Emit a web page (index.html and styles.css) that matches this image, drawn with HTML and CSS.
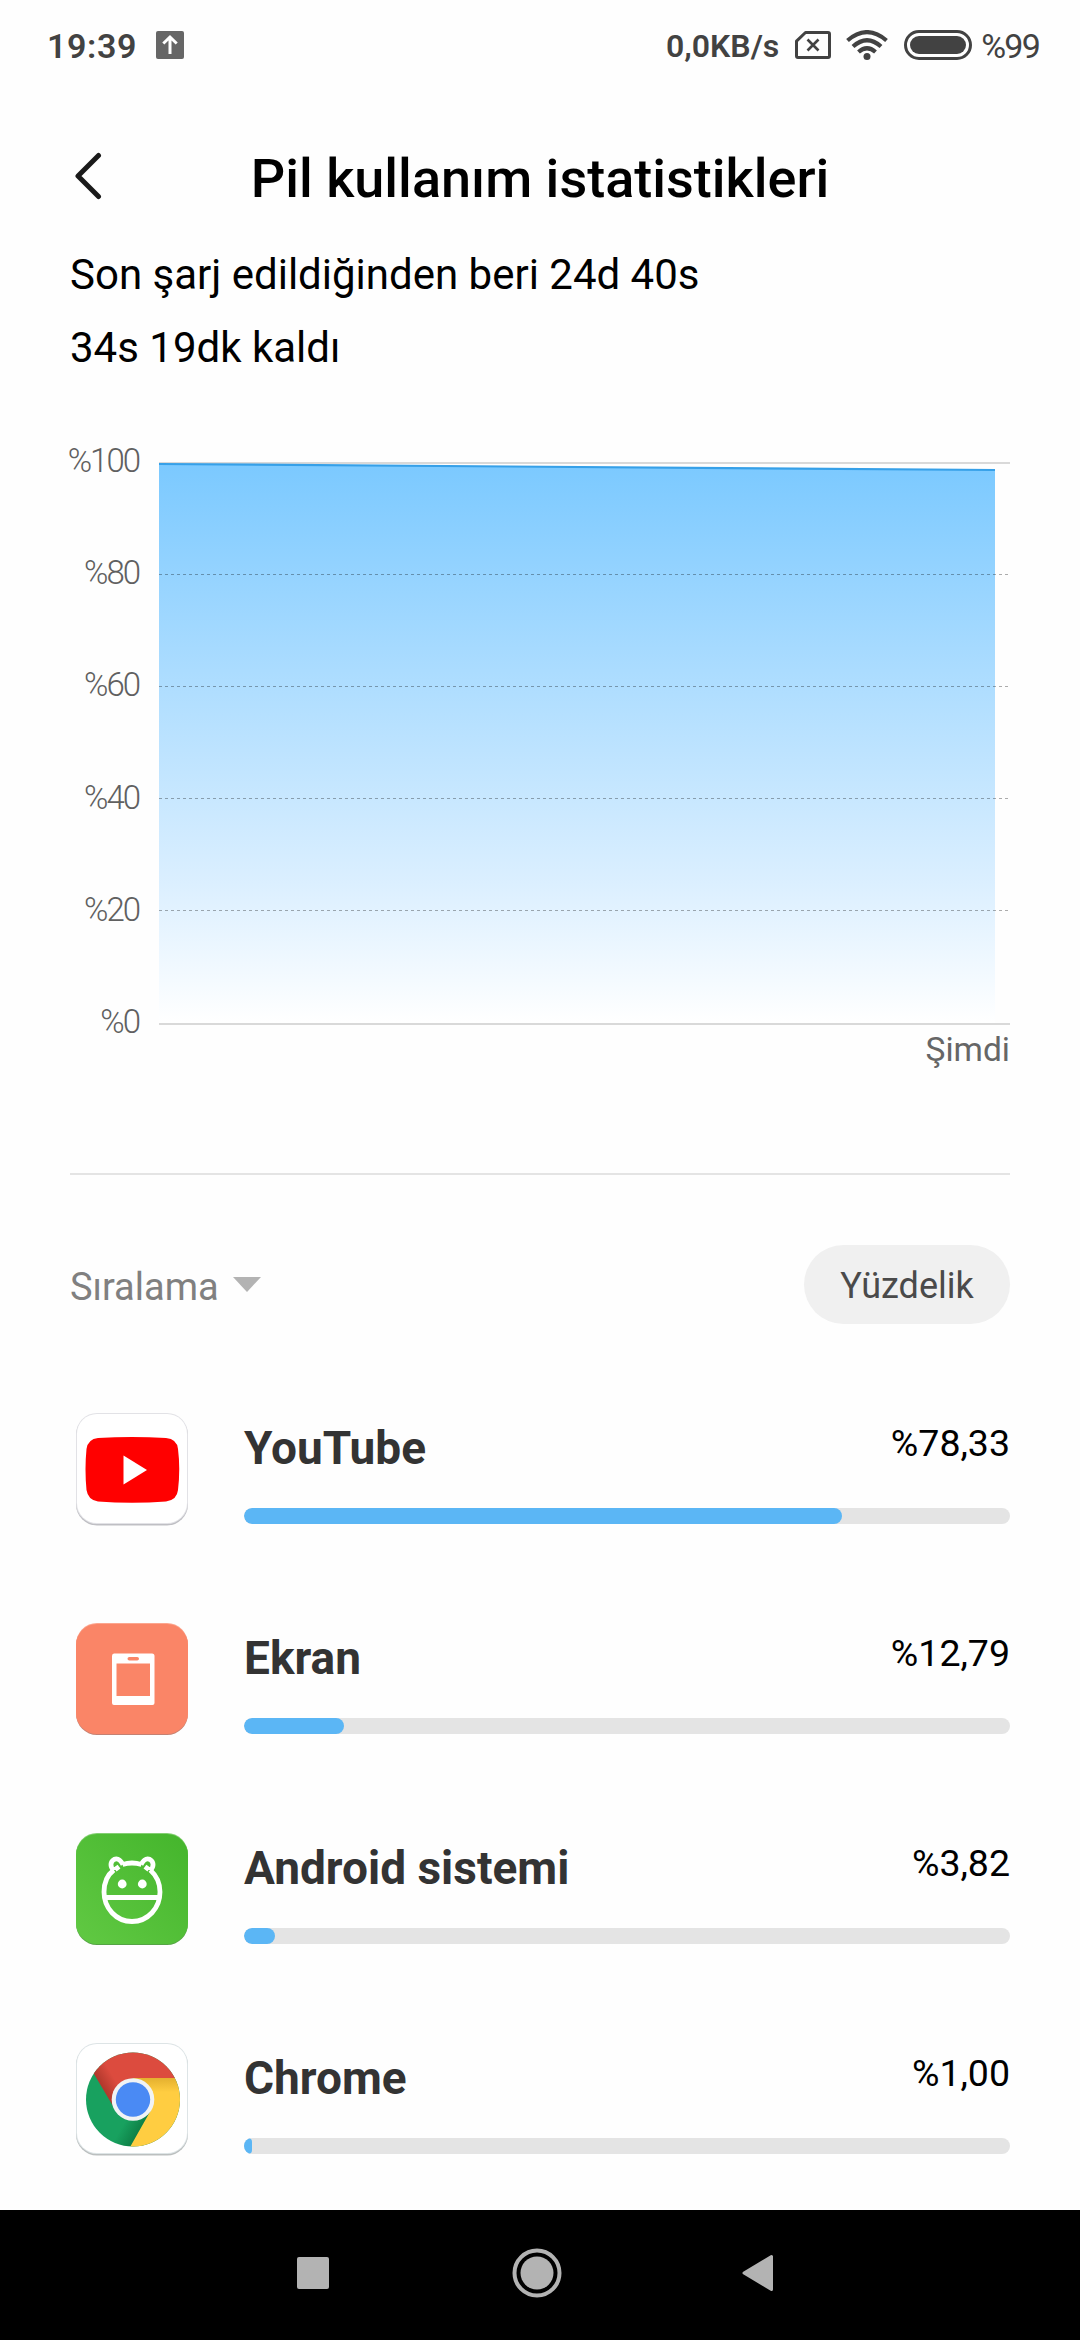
FILE: index.html
```html
<!DOCTYPE html>
<html lang="tr">
<head>
<meta charset="utf-8">
<title>Pil kullanım istatistikleri</title>
<link rel="stylesheet" href="styles.css">
</head>
<body>
<div class="screen">
  <div class="status">
    <span class="clock">19:39</span>
    <svg class="upload" width="28" height="28" viewBox="0 0 28 28"><rect width="28" height="28" rx="2" fill="#666"/><path d="M14 23V7M7.3 12.5 14 6l6.700 6.500" fill="none" stroke="#fff" stroke-width="3"/></svg>
    <span class="speed">0,0KB/s</span>
    <svg class="sim" width="36" height="28" viewBox="0 0 36 28" fill="none" stroke="#424242"><path d="M10.500 1.500H33q1.500 0 1.500 1.500v22q0 1.500-1.500 1.500H3q-1.500 0-1.500-1.500V10.200z" stroke-width="3" stroke-linejoin="round"/><path d="m12.500 8.500 11 11m0-11-11 11" stroke-width="2.600"/></svg>
    <svg class="wifi" width="42" height="30" viewBox="0 0 42 30" fill="none" stroke="#424242" stroke-width="4.200"><path d="M1.500 10.500Q21-6.200 40.500 10.500"/><path d="M7 16.500Q21 4 35 16.500"/><path d="M12.500 22Q21 14.500 29.500 22"/><circle cx="21" cy="26.500" r="3.500" fill="#424242" stroke="none"/></svg>
    <svg class="battery" width="68" height="30" viewBox="0 0 68 30"><rect x="1.500" y="1.500" width="65" height="27" rx="13.500" fill="none" stroke="#424242" stroke-width="3"/><rect x="6" y="6" width="56" height="18" rx="9" fill="#424242"/></svg>
    <span class="level">%99</span>
  </div>

  <div class="header">
    <svg class="back" width="28" height="48" viewBox="0 0 28 48"><path d="M24.500 3.500 4 24l20.500 20.500" fill="none" stroke="#1a1a1a" stroke-width="5" stroke-linecap="round" stroke-linejoin="round"/></svg>
    <h1 class="title">Pil kullanım istatistikleri</h1>
  </div>

  <div class="summary">
    <div>Son şarj edildiğinden beri 24d 40s</div>
    <div>34s 19dk kaldı</div>
  </div>

  <div class="chart">
    <div class="scale">
      <span>%100</span><span>%80</span><span>%60</span><span>%40</span><span>%20</span><span>%0</span>
    </div>
    <div class="plot">
      <svg width="851" height="563" viewBox="0 0 851 563">
        <defs><linearGradient id="area" x1="0" y1="0" x2="0" y2="1"><stop offset="0" stop-color="#7bc9ff"/><stop offset=".33" stop-color="#a6daff"/><stop offset=".75" stop-color="#dbefff"/><stop offset="1" stop-color="#fff"/></linearGradient></defs>
        <path d="M0 1H851M0 562H851" stroke="#d9d9d9" stroke-width="2"/>
        <path d="M0 2 836 8V561H0z" fill="url(#area)"/>
        <path d="M0 2 836 8" stroke="#36a0e8" stroke-width="2.200"/>
        <path d="M0 112.500H850M0 224.500H850M0 336.500H850M0 448.500H850" stroke="#000" stroke-opacity=".32" stroke-width="1" stroke-dasharray="3 3"/>
      </svg>
      <div class="now">Şimdi</div>
    </div>
  </div>

  <div class="controls">
    <div class="sort">Sıralama <svg width="28" height="15" viewBox="0 0 28 15"><path d="M0 0H28L14 15z" fill="#b3b3b3"/></svg></div>
    <div class="mode">Yüzdelik</div>
  </div>

  <div class="list">
    <div class="row">
      <svg class="icon" width="114" height="114" viewBox="0 0 114 114"><rect x="1" y="2" width="112" height="111.500" rx="21" fill="#bfbfc4"/><rect x="1" y="1" width="112" height="111" rx="21" fill="#e2e2e6"/><rect x="2" y="2" width="110" height="109" rx="20" fill="#fff"/><path d="M23 26Q57 24 91 26Q102 27 103 37Q105.500 57 103 78Q102 88 91 89.500Q57 92 23 89.500Q13 88 11.500 78Q9.500 57 11.500 37Q13 27 23 26z" fill="#f00"/><path d="M48.500 43.500V72.500L72 58z" fill="#fff"/></svg>
      <div class="body">
        <div class="head"><span class="name">YouTube</span><span class="value">%78,33</span></div>
        <div class="track"><div class="fill" style="width:598px"></div></div>
      </div>
    </div>
    <div class="row">
      <svg class="icon" width="114" height="114" viewBox="0 0 114 114"><rect x="1" y="2" width="112" height="111" rx="21" fill="#c48172"/><rect x="1" y="1" width="112" height="110" rx="21" fill="#fca68f"/><rect x="1" y="2" width="112" height="110" rx="21" fill="#fa8567"/><path fill-rule="evenodd" fill="#fff" d="M39 31.500H77Q79.500 31.500 79.500 34V81Q79.500 83 77.500 83H39Q37 83 37 81V34Q37 31.500 39 31.500zM41.500 41.500V74H75V41.500zM54.300 35Q52.500 35 52.500 36.700T54.300 38.400H62.200Q64 38.400 64 36.700T62.200 35z"/></svg>
      <div class="body">
        <div class="head"><span class="name">Ekran</span><span class="value">%12,79</span></div>
        <div class="track"><div class="fill" style="width:100px"></div></div>
      </div>
    </div>
    <div class="row">
      <svg class="icon" width="114" height="114" viewBox="0 0 114 114"><defs><linearGradient id="leaf" x1="0" y1="1" x2="1" y2="0"><stop offset="0" stop-color="#61c943"/><stop offset="1" stop-color="#44b52c"/></linearGradient></defs><rect x="1" y="2" width="112" height="111" rx="21" fill="#55a445"/><rect x="1" y="1" width="112" height="110" rx="21" fill="#83cf72"/><rect x="1" y="2" width="112" height="110" rx="21" fill="url(#leaf)"/><g fill="none" stroke="#fff" stroke-width="4.800"><path d="M47.500 32.500Q57 29.500 66.500 32.500M38.800 38C31 44 29 52 29 60C29 76 41 89.500 57 89.500S85 76 85 60C85 52 82 44 75.200 38M30 65.500H84"/><path d="M43.500 38 40.700 34.200M38.800 38.500C34.500 34.500 35.500 29.500 39 27.500C43 25.500 46 29 48 32.500M70.500 38 73.300 34.200M75.200 38.500C79.500 34.500 78.500 29.500 75 27.500C71 25.500 68 29 66 32.500"/></g><circle cx="47.200" cy="52" r="4.400" fill="#fff"/><circle cx="67.300" cy="52" r="4.400" fill="#fff"/></svg>
      <div class="body">
        <div class="head"><span class="name">Android sistemi</span><span class="value">%3,82</span></div>
        <div class="track"><div class="fill" style="width:31px"></div></div>
      </div>
    </div>
    <div class="row">
      <svg class="icon" width="114" height="114" viewBox="0 0 114 114"><defs><clipPath id="disc"><circle cx="58" cy="57.500" r="47"/></clipPath><linearGradient id="shadeR" gradientUnits="userSpaceOnUse" x1="27" y1="50" x2="42" y2="41"><stop offset="0" stop-color="#a93529"/><stop offset="1" stop-color="#dc4b3e"/></linearGradient><linearGradient id="shadeY" x1="0" y1="0" x2="0" y2="1"><stop offset="0" stop-color="#e4b02f"/><stop offset=".18" stop-color="#ffcd41"/></linearGradient><linearGradient id="shadeG" gradientUnits="userSpaceOnUse" x1="64" y1="92" x2="48" y2="83"><stop offset="0" stop-color="#0d7e45"/><stop offset="1" stop-color="#18a15f"/></linearGradient></defs><rect x="1" y="2" width="112" height="111.500" rx="21" fill="#bbbfbf"/><rect x="1" y="1" width="112" height="111" rx="21" fill="#dde4e6"/><rect x="2" y="2" width="110" height="109" rx="20" fill="#fff"/><g clip-path="url(#disc)"><rect width="114" height="114" fill="url(#shadeG)"/><path d="M58 36H114V114H50L76 68z" fill="url(#shadeY)"/><path d="M0 0H114V36H58L38 64 19 32z" fill="url(#shadeR)"/></g><circle cx="58" cy="57.500" r="21.300" fill="#f1f3f4"/><circle cx="58" cy="57.500" r="17.200" fill="#4a8af4"/></svg>
      <div class="body">
        <div class="head"><span class="name">Chrome</span><span class="value">%1,00</span></div>
        <div class="track"><div class="fill" style="width:8px"></div></div>
      </div>
    </div>
  </div>

  <div class="nav">
    <svg width="32" height="32" viewBox="0 0 32 32"><rect width="32" height="32" rx="2" fill="#b3b3b3"/></svg>
    <svg width="50" height="50" viewBox="0 0 50 50"><circle cx="25" cy="25" r="22.500" fill="none" stroke="#b3b3b3" stroke-width="4"/><circle cx="25" cy="25" r="16.500" fill="#b3b3b3"/></svg>
    <svg width="32" height="38" viewBox="0 0 32 38"><path d="M2 19 29.500 2.500V35.500z" fill="#b3b3b3" stroke="#b3b3b3" stroke-width="3" stroke-linejoin="round"/></svg>
  </div>
</div>
</body>
</html>
```
FILE: styles.css
```css
* { box-sizing: border-box; }
body { margin: 0; background: #fefefe; font-family: Roboto, "Noto Sans", sans-serif; color: #000; }
svg { display: block; flex: none; }
.screen { width: 1080px; height: 2340px; display: flex; flex-direction: column; background: #fefefe; overflow: hidden; white-space: nowrap; }

.status { height: 90px; padding: 0 41px 0 47px; display: flex; align-items: center; color: #424242; flex: none; }
.clock { width: 89px; font-size: 34px; font-weight: 600; line-height: 40px; padding-top: 2px; letter-spacing: .6px; }
.upload { margin-left: 20px; }
.speed { margin-left: auto; font-size: 32px; font-weight: 600; line-height: 40px; padding-top: 2px; }
.sim { margin-left: 16px; }
.wifi { margin-left: 15px; }
.battery { margin-left: 16px; }
.level { margin-left: 9px; font-size: 34px; line-height: 40px; padding-top: 1px; letter-spacing: -1.8px; }

.header { height: 148px; padding: 29px 75px 0 74px; display: flex; align-items: center; flex: none; }
.back { margin-top: -5px; }
.title { margin: 0; flex: 1; padding-right: 27px; text-align: center; font-size: 54px; font-weight: 500; line-height: 64px; }

.summary { padding: 0 70px; font-size: 42px; line-height: 73px; flex: none; }

.chart { margin: 56px 70px 0; height: 735px; display: flex; border-bottom: 2px solid #e4e4e4; flex: none; }
.scale { width: 89px; height: 602px; padding: 1px 20px 0 0; display: flex; flex-direction: column; justify-content: space-between; align-items: flex-end; font-size: 33px; font-weight: 350; line-height: 40px; letter-spacing: -2px; color: #606060; }
.plot { flex: 1; padding-top: 22px; }
.now { margin-top: 5px; text-align: right; font-size: 33.5px; line-height: 40px; color: #666; }

.controls { margin: 70px 70px 0; height: 79px; display: flex; align-items: center; justify-content: space-between; flex: none; }
.sort { display: flex; align-items: center; gap: 14px; font-size: 38px; line-height: 46px; padding-top: 4px; color: #808080; }
.sort svg { margin-top: -5px; }
.mode { width: 206px; height: 79px; border-radius: 40px; background: #f0f0f0; color: #4a4a4a; font-size: 36px; line-height: 83px; text-align: center; }

.list { margin: 40px 70px 0 75px; display: flex; flex-direction: column; flex: none; }
.row { height: 210px; display: flex; align-items: flex-start; }
.icon { margin-top: 48px; }
.body { margin-left: 55px; flex: 1; padding-top: 56px; }
.head { height: 56px; display: flex; justify-content: space-between; }
.name { font-size: 46px; font-weight: 700; line-height: 56px; color: #333; }
.value { font-size: 37.5px; line-height: 46px; }
.track { margin-top: 32px; height: 16px; border-radius: 8px; background: #e4e4e4; overflow: hidden; }
.fill { height: 16px; border-radius: 8px; background: #5bb6f5; }

.nav { margin-top: auto; height: 130px; padding: 0 306px 5px 297px; display: flex; align-items: center; gap: 180px; background: #000; flex: none; }
.nav svg:first-child { margin-right: 3px; }
```
